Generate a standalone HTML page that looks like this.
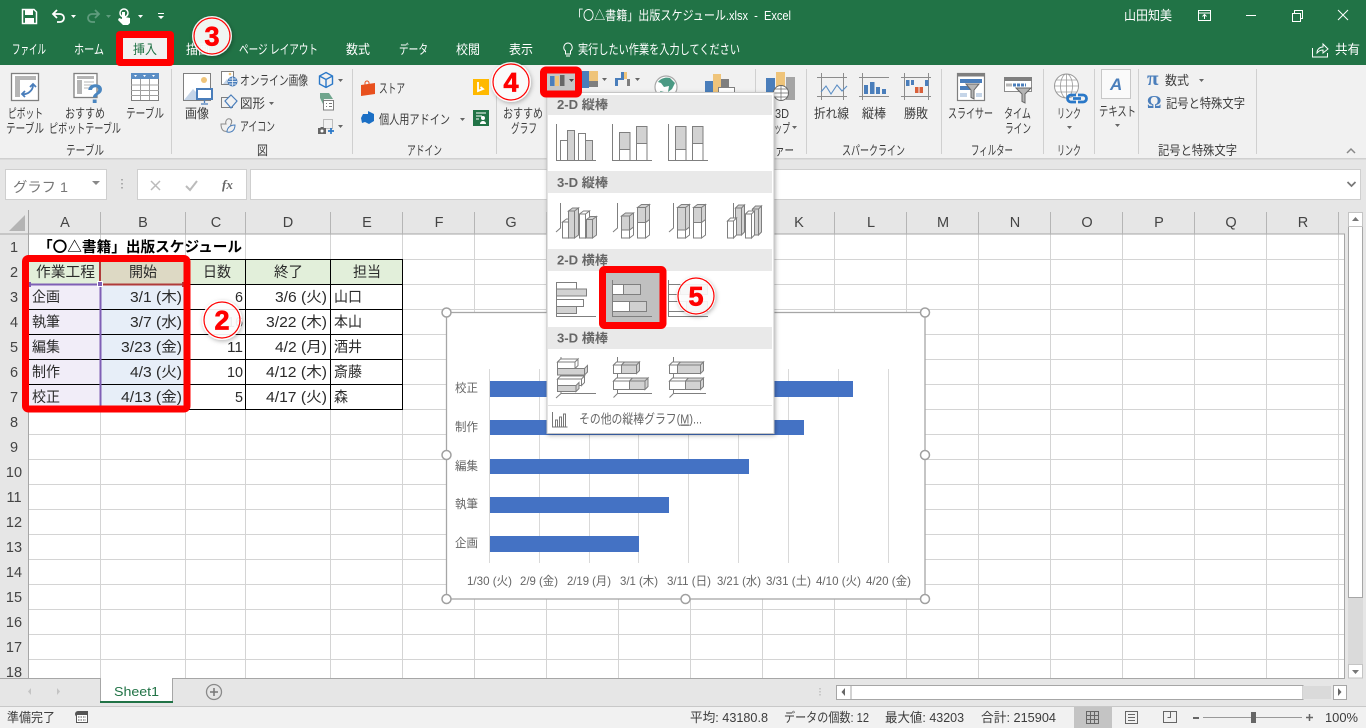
<!DOCTYPE html>
<html lang="ja"><head><meta charset="utf-8"><title>Excel</title>
<style>
html,body{margin:0;padding:0;width:1366px;height:728px;overflow:hidden;background:#e6e6e6}
svg{display:block;position:absolute;left:0;top:0}
text{font-family:"Liberation Sans","Noto Sans CJK JP",sans-serif;font-size:12.5px;fill:#444;white-space:pre}
.w{fill:#fff;font-size:13px}
.r text,text.r{fill:#3c3c3c;font-size:13px}
.c text{font-size:14.5px;fill:#2a2a2a}
.h text{font-size:14.5px;fill:#444}
.ch text{fill:#666;font-size:12px}
.m text{fill:#666;font-weight:bold;font-size:12.5px}
.b{fill:#fff;stroke:#7f7f7f;stroke-width:1}
.g{fill:#d2d2d2;stroke:#7f7f7f;stroke-width:1}
.ax{fill:none;stroke:#7f7f7f;stroke-width:1}
.n text{font-family:"Liberation Sans",sans-serif;font-weight:bold;font-size:27px;fill:#f00;stroke:#f00;stroke-width:.7px}
</style></head><body>
<svg width="1366" height="728" viewBox="0 0 1366 728">
<defs><filter id="s" x="-30%" y="-30%" width="170%" height="170%"><feDropShadow dx="1" dy="1.5" stdDeviation="2" flood-color="#000" flood-opacity=".3"/></filter></defs>

<!-- base -->
<rect width="1366" height="728" fill="#e6e6e6"/>
<rect width="1366" height="65" fill="#217346"/>
<rect y="65" width="1366" height="93" fill="#f1f1f1"/>
<rect y="158" width="1366" height="1.5" fill="#d0d0d0"/>

<!-- title -->
<text class="w" x="572" y="20" textLength="219" lengthAdjust="spacingAndGlyphs">「〇△書籍」出版スケジュール.xlsx  -  Excel</text>
<text class="w" x="1124" y="20" textLength="48" lengthAdjust="spacingAndGlyphs">山田知美</text>
<!-- qat -->
<path d="M22.5 9.5h11.5l2.500 2.500v11.500h-14z" fill="none" stroke="#fff" stroke-width="1.500"/>
<rect x="25" y="10" width="8" height="5" fill="#fff"/><rect x="25" y="18" width="9" height="5" fill="#fff"/>
<path d="M53 14h7a4 4 0 0 1 0 8h-3M57 10l-4 4 4 4" fill="none" stroke="#fff" stroke-width="1.800"/>
<path d="M71 15h5l-2.500 3z" fill="#fff"/>
<path d="M99 14h-7a4 4 0 0 0 0 8h3M95 10l4 4-4 4" fill="none" stroke="#5f9c7d" stroke-width="1.800"/>
<path d="M106 15h5l-2.500 3z" fill="#5f9c7d"/>
<circle cx="124" cy="13" r="4" fill="none" stroke="#fff" stroke-width="1.500"/>
<path d="M122 12h3v5l5 1v5l-2 2h-5l-5-5 1-2 3 1z" fill="#fff"/>
<path d="M138 15h5l-2.500 3z" fill="#fff"/>
<path d="M158 13h6v1h-6zM158 16h6l-3 3z" fill="#fff"/>
<!-- window buttons -->
<rect x="1198.500" y="10.500" width="12" height="10" fill="none" stroke="#fff"/><path d="M1198 13h12M1204.500 19v-4M1202.500 16.500l2-2 2 2" fill="none" stroke="#fff"/>
<rect x="1246" y="15" width="10" height="1" fill="#fff"/>
<path d="M1292.500 13.500h8v8h-8zM1294.500 13v-2.500h8v8H1301" fill="none" stroke="#fff"/>
<path d="M1338 10l10 10M1348 10l-10 10" stroke="#fff" fill="none"/>
<!-- tabs -->
<g>
<text class="w" x="12" y="54" textLength="34" lengthAdjust="spacingAndGlyphs">ファイル</text>
<text class="w" x="74" y="54" textLength="30" lengthAdjust="spacingAndGlyphs">ホーム</text>
<rect x="116" y="31" width="58" height="35" rx="4" fill="#f00"/>
<rect x="123" y="38" width="44" height="21" fill="#f1f1f1"/>
<text x="133" y="54" textLength="24" lengthAdjust="spacingAndGlyphs" style="fill:#217346;font-size:13px">挿入</text>
<text class="w" x="186" y="54" textLength="24" lengthAdjust="spacingAndGlyphs">描画</text>
<text class="w" x="239" y="54" textLength="79" lengthAdjust="spacingAndGlyphs">ページ レイアウト</text>
<text class="w" x="346" y="54" textLength="24" lengthAdjust="spacingAndGlyphs">数式</text>
<text class="w" x="399" y="54" textLength="29" lengthAdjust="spacingAndGlyphs">データ</text>
<text class="w" x="456" y="54" textLength="24" lengthAdjust="spacingAndGlyphs">校閲</text>
<text class="w" x="509" y="54" textLength="24" lengthAdjust="spacingAndGlyphs">表示</text>
<path d="M568 43a4.500 4.500 0 0 1 2.500 8v3h-5v-3a4.500 4.500 0 0 1 2.500-8zM566 56h4" fill="none" stroke="#fff"/>
<text class="w" x="578" y="54" textLength="162" lengthAdjust="spacingAndGlyphs">実行したい作業を入力してください</text>
<path d="M1312.500 48v9h15v-4M1317 53c0-4 3-6 6-6v-3l5 5-5 4v-3c-3 0-4 1-6 3z" fill="none" stroke="#fff"/>
<text class="w" x="1335" y="54" textLength="25" lengthAdjust="spacingAndGlyphs">共有</text>
</g>

<!-- ribbon separators -->
<g fill="#d0d0d0">
<rect x="171" y="69" width="1" height="85"/><rect x="352" y="69" width="1" height="85"/><rect x="496" y="69" width="1" height="85"/><rect x="755" y="69" width="1" height="85"/><rect x="806" y="69" width="1" height="85"/><rect x="941" y="69" width="1" height="85"/><rect x="1043" y="69" width="1" height="85"/><rect x="1094" y="69" width="1" height="85"/><rect x="1138" y="69" width="1" height="85"/><rect x="1256" y="69" width="1" height="85"/>
</g>

<!-- ribbon text -->
<g class="r">
<text x="8" y="118" textLength="35" lengthAdjust="spacingAndGlyphs">ピボット</text>
<text x="6" y="133" textLength="38" lengthAdjust="spacingAndGlyphs">テーブル</text>
<text x="65" y="118" textLength="40" lengthAdjust="spacingAndGlyphs">おすすめ</text>
<text x="49" y="133" textLength="72" lengthAdjust="spacingAndGlyphs">ピボットテーブル</text>
<text x="126" y="118" textLength="38" lengthAdjust="spacingAndGlyphs">テーブル</text>
<text x="185" y="118" textLength="24" lengthAdjust="spacingAndGlyphs">画像</text>
<text x="240" y="85" textLength="68" lengthAdjust="spacingAndGlyphs">オンライン画像</text>
<text x="240" y="108" textLength="25" lengthAdjust="spacingAndGlyphs">図形</text>
<text x="240" y="131" textLength="35" lengthAdjust="spacingAndGlyphs">アイコン</text>
<text x="379" y="93" textLength="26" lengthAdjust="spacingAndGlyphs">ストア</text>
<text x="379" y="124" textLength="71" lengthAdjust="spacingAndGlyphs">個人用アドイン</text>
<text x="503" y="118" textLength="40" lengthAdjust="spacingAndGlyphs">おすすめ</text>
<text x="511" y="133" textLength="26" lengthAdjust="spacingAndGlyphs">グラフ</text>
<text x="775" y="118" textLength="14" lengthAdjust="spacingAndGlyphs">3D</text>
<text x="774" y="133" textLength="16" lengthAdjust="spacingAndGlyphs">ップ</text>
<text x="775" y="155" textLength="19" lengthAdjust="spacingAndGlyphs">ァー</text>
<text x="66" y="155" textLength="38" lengthAdjust="spacingAndGlyphs">テーブル</text>
<text x="257" y="155" textLength="11" lengthAdjust="spacingAndGlyphs">図</text>
<text x="407" y="155" textLength="35" lengthAdjust="spacingAndGlyphs">アドイン</text>
<text x="814" y="118" textLength="35" lengthAdjust="spacingAndGlyphs">折れ線</text>
<text x="862" y="118" textLength="24" lengthAdjust="spacingAndGlyphs">縦棒</text>
<text x="904" y="118" textLength="24" lengthAdjust="spacingAndGlyphs">勝敗</text>
<text x="948" y="118" textLength="45" lengthAdjust="spacingAndGlyphs">スライサー</text>
<text x="1004" y="118" textLength="27" lengthAdjust="spacingAndGlyphs">タイム</text>
<text x="1005" y="133" textLength="26" lengthAdjust="spacingAndGlyphs">ライン</text>
<text x="1057" y="118" textLength="24" lengthAdjust="spacingAndGlyphs">リンク</text>
<text x="1099" y="116" textLength="37" lengthAdjust="spacingAndGlyphs">テキスト</text>
<text x="1165" y="85" textLength="24" lengthAdjust="spacingAndGlyphs">数式</text>
<text x="1166" y="108" textLength="79" lengthAdjust="spacingAndGlyphs">記号と特殊文字</text>
<text x="842" y="155" textLength="63" lengthAdjust="spacingAndGlyphs">スパークライン</text>
<text x="971" y="155" textLength="42" lengthAdjust="spacingAndGlyphs">フィルター</text>
<text x="1057" y="155" textLength="24" lengthAdjust="spacingAndGlyphs">リンク</text>
<text x="1158" y="155" textLength="79" lengthAdjust="spacingAndGlyphs">記号と特殊文字</text>
</g>
<!-- carets -->
<g fill="#666">
<path d="M269 102h5l-2.500 3zM338 79h5l-2.500 3zM338 125h5l-2.500 3zM460 118h5l-2.500 3zM602 78h5l-2.500 3zM635 78h5l-2.500 3zM792 126h5l-2.500 3zM1067 126h5l-2.500 3zM1115 124h5l-2.500 3zM1199 79h5l-2.500 3z"/>
<path d="M1347 153l4-4 4 4" fill="none" stroke="#888" stroke-width="1.500"/>
</g>

<!-- ribbon icons -->
<!-- pivot -->
<rect x="11.500" y="73.500" width="27" height="27" fill="#fff" stroke="#7f7f7f" stroke-width="1.300"/>
<rect x="15" y="76" width="21" height="4" fill="#b5b5b5"/><rect x="15" y="80" width="5" height="17" fill="#b5b5b5"/>
<path d="M22 94c5 1 11-3 11-9M30 87l3-3 3 3M25 91l-3 3 3 3" fill="none" stroke="#4a7ebb" stroke-width="1.800"/>
<!-- recommended pivot -->
<rect x="74" y="73.500" width="23" height="24" fill="#fff" stroke="#7f7f7f" stroke-width="1.300"/>
<rect x="77" y="76" width="17" height="3" fill="#b5b5b5"/><rect x="77" y="80" width="5" height="14" fill="#b5b5b5"/><path d="M84 82h10M84 85h8M84 88h6" stroke="#b5b5b5"/>
<text x="87" y="103" style="font-size:27px;font-weight:bold;fill:#4a86c0">?</text>
<!-- table -->
<rect x="131.500" y="73.500" width="27" height="27" fill="#fff" stroke="#7f7f7f"/>
<rect x="131" y="73" width="28" height="6" fill="#5b8ec5"/>
<path d="M131 85h28M131 90.500h28M131 95.500h28M140.500 79v21M149.500 79v21" stroke="#a0a0a0"/>
<path d="M134 75h3l-1.500 2zM143 75h3l-1.500 2zM152 75h3l-1.500 2z" fill="#fff"/>
<!-- picture -->
<rect x="183.500" y="73.500" width="27" height="27" fill="#fff" stroke="#7f7f7f"/>
<circle cx="204" cy="80" r="3" fill="#efc47a"/>
<path d="M184 100l9-11 7 7 4 4z" fill="#c5d5e8"/>
<rect x="197" y="89" width="15" height="10" fill="#fff" stroke="#4a7ebb" stroke-width="2"/>
<path d="M204.500 100v3M201 104h7" stroke="#4a7ebb" stroke-width="1.300"/>
<!-- online -->
<rect x="221.500" y="71.500" width="12" height="13" fill="#fff" stroke="#7f7f7f"/>
<circle cx="230" cy="74" r="1.300" fill="#efc47a"/><path d="M223 84l4-5 3 5z" fill="#c5d5e8"/>
<circle cx="232.500" cy="81.500" r="5" fill="#4a7ebb"/><path d="M228 81.500h9M232.500 77v9M229 79h7M229 84h7" stroke="#fff" stroke-width=".7" fill="none"/>
<!-- shapes -->
<rect x="221.500" y="97.500" width="11" height="10" fill="none" stroke="#7f7f7f"/>
<path d="M231 95l6 6-6 7-6-7z" fill="#f1f1f1" stroke="#4a7ebb" stroke-width="1.200"/>
<!-- icons -->
<path d="M221 124h5c-1-3 1-6 4-5 2 1 2 3 1 5l-1 3c-1 4-3 5-6 4-2-1-3-4-3-7z" fill="none" stroke="#8a8a8a"/>
<path d="M227 132c0-4 3-7 8-7 0 5-3 8-8 7z" fill="#f1f1f1" stroke="#4a7ebb"/>
<!-- 3d -->
<path d="M326 72.500l6.500 3.500v8l-6.500 3.500-6.500-3.500v-8zM319.500 76l6.500 3.500 6.500-3.500M326 79.500v8" fill="none" stroke="#2a78c8" stroke-width="1.400"/>
<!-- smartart -->
<path d="M320 93h9l4 6h-9l-1 5-3-6z" fill="#6fa58d"/><rect x="323.500" y="100.500" width="10" height="9.500" fill="#fff" stroke="#7f7f7f"/><path d="M326 103.500h1M329 103.500h3M326 106.500h1M329 106.500h3" stroke="#777"/>
<!-- screenshot -->
<rect x="323.500" y="119.500" width="9" height="9" fill="none" stroke="#888" stroke-dasharray="1 1"/>
<path d="M318 128h2l1-1h2l1 1h2v6h-8z" fill="#666"/><circle cx="322" cy="131" r="1.500" fill="#fff"/>
<path d="M328 131h6M331 128v6" stroke="#2a78c8" stroke-width="1.700"/>
<!-- store, addin -->
<path d="M361 85l14-2v11l-14 2z" fill="#e8501e"/><path d="M365 85v-2a2 2 0 0 1 4 0v1" fill="none" stroke="#e8501e"/>
<path d="M368 111l6 3v7l-5 3-4-2-3 1-1-5 2-4 5 0z" fill="#1b6fc5"/>
<rect x="473" y="79" width="16" height="16" fill="#ffb900"/>
<path d="M478 82v9l5-2-2.500-2" fill="none" stroke="#fff" stroke-width="1.800"/>
<rect x="473" y="110" width="16" height="16" fill="#217346"/>
<path d="M476 113h10M476 116h6M476 119h3" stroke="#fff"/><circle cx="483" cy="118" r="2" fill="#fff"/><path d="M480 124c0-4 6-4 6 0z" fill="#fff"/>
<!-- chart row -->
<rect x="582" y="71" width="7" height="17" fill="#4a7ebb"/><rect x="589" y="71" width="9" height="10" fill="#efc47a"/><rect x="589" y="81" width="9" height="6" fill="#7f7f7f"/>
<rect x="615" y="78" width="3" height="8" fill="#4a7ebb"/><rect x="618" y="78" width="3" height="2" fill="#4a7ebb"/><rect x="621" y="72" width="3" height="8" fill="#4a7ebb"/><rect x="624" y="72" width="3" height="7" fill="#efc47a"/><rect x="627" y="79" width="3" height="7" fill="#7f7f7f"/>
<circle cx="666" cy="87" r="11" fill="#fff" stroke="#a8a8a8" stroke-width="1.200"/><path d="M658 82c3-4 8-5 12-4l5 5-3 6-4 3 1-6-5 1-3-4z" fill="#4b9a84"/><path d="M660 91l4 1 1 5-3-2z" fill="#4b9a84"/>
<rect x="705" y="81" width="8" height="11" fill="#4a7ebb"/><rect x="713" y="74" width="8" height="18" fill="#efc47a"/><rect x="721" y="79" width="8" height="13" fill="#7f7f7f"/>
<rect x="718.500" y="87.500" width="16" height="6" fill="#fff" stroke="#7f7f7f"/>
<rect x="766" y="78" width="9" height="20" fill="#4a7ebb"/><rect x="776" y="72" width="9" height="20" fill="#efc47a"/><rect x="786" y="77" width="9" height="23" fill="#a5a5a5"/>
<circle cx="781" cy="93" r="7.500" fill="#fff" stroke="#666"/><path d="M773.500 93h15M781 85.500v15M775 89h12M775 97h12" stroke="#666" stroke-width=".7"/>
<!-- sparklines -->
<g fill="none" stroke="#8c8c8c">
<path d="M817 77.500h30M817 96.500h30M821.500 73v27M843.500 73v27"/>
<path d="M859 77.500h30M859 96.500h30M862.500 73v27"/>
<path d="M901 77.500h30M901 96.500h30M904.500 73v27M928.500 73v27"/>
</g>
<path d="M821 92l5-6 5 8 6-9 5 6 5-5" fill="none" stroke="#5b8ec5" stroke-width="1.100"/>
<g fill="#4a7ebb"><rect x="864" y="85" width="4" height="9"/><rect x="870" y="82" width="4.500" height="12"/><rect x="876" y="87" width="4" height="7"/><rect x="882" y="89" width="4" height="5"/>
<rect x="906" y="80" width="3.500" height="6"/><rect x="911" y="80" width="3" height="5"/><rect x="925" y="80" width="3.500" height="6"/></g>
<rect x="915" y="87" width="3.500" height="6" fill="#d9603a"/><rect x="919.500" y="87" width="3.500" height="6" fill="#d9603a"/>
<!-- slicer -->
<rect x="957.500" y="73.500" width="27" height="27" fill="#fff" stroke="#7f7f7f" stroke-width="1.200"/><rect x="957" y="73" width="28" height="3.500" fill="#7f7f7f"/>
<rect x="960" y="79" width="22" height="4" fill="#4a7ebb"/><rect x="960" y="86" width="14" height="4" fill="#4a7ebb"/><rect x="960" y="93" width="7" height="4" fill="#c5d5e8"/><rect x="976" y="93" width="6" height="4" fill="#c5d5e8"/>
<path d="M966 84h13l-5 6v9l-3-1.500V90z" fill="#b5b5b5" stroke="#666"/>
<!-- timeline -->
<rect x="1004.500" y="77.500" width="27" height="14" fill="#fff" stroke="#8c8c8c"/><rect x="1004" y="77" width="28" height="4" fill="#7f7f7f"/>
<path d="M1006 85h6" stroke="#b5b5b5" stroke-width="3"/><path d="M1013 85h13" stroke="#4a7ebb" stroke-width="3" stroke-dasharray="3 1"/>
<path d="M1016 88h15l-6 6v9l-3-1.500V94z" fill="#b5b5b5" stroke="#666"/>
<!-- link -->
<circle cx="1066.500" cy="86" r="12" fill="#fff" stroke="#9a9a9a"/><path d="M1054.500 86h24M1066.500 74v24M1056 80h21M1056 92h21" stroke="#9a9a9a" stroke-width=".8"/><ellipse cx="1066.500" cy="86" rx="6" ry="12" fill="none" stroke="#9a9a9a" stroke-width=".8"/>
<path d="M1076 102h-5a3.500 3.500 0 0 1 0-7h5M1073 98.500h8M1078 95h5a3.500 3.500 0 0 1 0 7h-5" fill="none" stroke="#2a78c8" stroke-width="2.800"/>
<!-- text -->
<rect x="1101.500" y="69.500" width="29" height="29" fill="#fafafa" stroke="#c8c8c8"/>
<text x="1110" y="90" style="font-size:17px;font-weight:bold;font-style:italic;fill:#4a7ebb">A</text>
<text x="1147" y="85" style="font-family:'Liberation Serif',serif;font-size:21px;font-weight:bold;fill:#4a7ebb">π</text>
<text x="1147" y="108" style="font-family:'Liberation Serif',serif;font-size:18px;font-weight:bold;fill:#4a7ebb">Ω</text>

<!-- formula bar -->
<rect x="5.500" y="169.500" width="101" height="30" fill="#fff" stroke="#cfcfcf"/>
<text x="13" y="192" textLength="55" lengthAdjust="spacingAndGlyphs" style="font-size:14px;fill:#777">グラフ 1</text>
<path d="M92 181h8l-4 4z" fill="#888"/>
<path d="M122 179v1.500M122 183v1.500M122 187v1.500" stroke="#999" stroke-width="1.500"/>
<rect x="137.500" y="169.500" width="109" height="30" fill="#fff" stroke="#cfcfcf"/>
<rect x="250.500" y="169.500" width="1110" height="30" fill="#fff" stroke="#cfcfcf"/>
<path d="M151 181l9 9M160 181l-9 9" stroke="#bbb" stroke-width="1.500"/>
<path d="M186 186l4 4 7-9" stroke="#bbb" stroke-width="2" fill="none"/>
<text x="222" y="189" style="font-family:'Liberation Serif',serif;font-style:italic;font-weight:bold;font-size:13px;fill:#666">fx</text>
<path d="M1347.500 182l4 4 4-4" fill="none" stroke="#777" stroke-width="1.700"/>

<!-- sheet -->
<rect x="29" y="234" width="1316" height="444" fill="#fff"/>
<g stroke="#d4d4d4" stroke-width="1">
<path d="M29 259.500h1316M29 284.500h1316M29 309.500h1316M29 334.500h1316M29 359.500h1316M29 384.500h1316M29 409.500h1316M29 434.500h1316M29 459.500h1316M29 484.500h1316M29 509.500h1316M29 534.500h1316M29 559.500h1316M29 584.500h1316M29 609.500h1316M29 634.500h1316M29 659.500h1316"/>
<path d="M100.500 234v444M185.500 234v444M245.500 234v444M330.500 234v444M402.500 234v444M474.500 234v444M546.500 234v444M618.500 234v444M690.500 234v444M762.500 234v444M834.500 234v444M906.500 234v444M978.500 234v444M1050.500 234v444M1122.500 234v444M1194.500 234v444M1266.500 234v444M1338.500 234v444"/>
</g>
<path d="M1344.500 234v444.500H0" stroke="#a6a6a6" fill="none"/>
<path d="M0 234h1345" stroke="#a6a6a6"/>
<path d="M28.500 210v468" stroke="#a6a6a6"/>
<g stroke="#b5b5b5"><path d="M100.500 212v22M185.500 212v22M245.500 212v22M330.500 212v22M402.500 212v22M474.500 212v22M546.500 212v22M618.500 212v22M690.500 212v22M762.500 212v22M834.500 212v22M906.500 212v22M978.500 212v22M1050.500 212v22M1122.500 212v22M1194.500 212v22M1266.500 212v22M1338.500 212v22"/></g>
<path d="M25 215v16H9z" fill="#b4b4b4"/>
<g class="h" text-anchor="middle">
<text x="65" y="227">A</text><text x="143" y="227">B</text><text x="216" y="227">C</text><text x="288" y="227">D</text><text x="367" y="227">E</text><text x="439" y="227">F</text><text x="511" y="227">G</text><text x="583" y="227">H</text><text x="655" y="227">I</text><text x="727" y="227">J</text><text x="799" y="227">K</text><text x="871" y="227">L</text><text x="943" y="227">M</text><text x="1015" y="227">N</text><text x="1087" y="227">O</text><text x="1159" y="227">P</text><text x="1231" y="227">Q</text><text x="1303" y="227">R</text>
<text x="14" y="252">1</text><text x="14" y="277">2</text><text x="14" y="302">3</text><text x="14" y="327">4</text><text x="14" y="352">5</text><text x="14" y="377">6</text><text x="14" y="402">7</text><text x="14" y="427">8</text><text x="14" y="452">9</text><text x="14" y="477">10</text><text x="14" y="502">11</text><text x="14" y="527">12</text><text x="14" y="552">13</text><text x="14" y="577">14</text><text x="14" y="602">15</text><text x="14" y="627">16</text><text x="14" y="652">17</text><text x="14" y="677">18</text>
</g>

<!-- table -->
<rect x="29" y="260" width="374" height="24" fill="#e2efda"/>
<rect x="101" y="260" width="85" height="24" fill="#ddd9c4"/>
<rect x="29" y="285" width="72" height="124" fill="#f1edf8"/>
<rect x="101" y="285" width="85" height="124" fill="#e7eef8"/>
<g stroke="#000" fill="none">
<path d="M29 259.500h374M29 284.500h374M29 309.500h374M29 334.500h374M29 359.500h374M29 384.500h374M29 409.500h374"/>
<path d="M100.500 259v151M185.500 259v151M245.500 259v151M330.500 259v151M402.500 259v151"/>
</g>
<path d="M29 284.500h72M100.500 284v122" stroke="#7f5fb5" stroke-width="2" fill="none"/>
<path d="M101 284.500h83M100 262v22" stroke="#b03a3a" stroke-width="2" fill="none"/>
<rect x="97.500" y="281.500" width="5" height="5" fill="#7f5fb5" stroke="#fff"/>
<rect x="28" y="282" width="3" height="5" fill="#7f5fb5"/><rect x="182" y="282" width="3" height="5" fill="#b03a3a"/>
<g class="c">
<text x="38" y="252" textLength="204" lengthAdjust="spacingAndGlyphs" style="font-weight:bold;fill:#000">「〇△書籍」出版スケジュール</text>
<text x="36" y="277" textLength="59" lengthAdjust="spacingAndGlyphs">作業工程</text>
<text x="129" y="277" textLength="28" lengthAdjust="spacingAndGlyphs">開始</text>
<text x="203" y="277" textLength="28" lengthAdjust="spacingAndGlyphs">日数</text>
<text x="274" y="277" textLength="29" lengthAdjust="spacingAndGlyphs">終了</text>
<text x="353" y="277" textLength="28" lengthAdjust="spacingAndGlyphs">担当</text>
<text x="32" y="302" textLength="28" lengthAdjust="spacingAndGlyphs">企画</text>
<text x="32" y="327" textLength="28" lengthAdjust="spacingAndGlyphs">執筆</text>
<text x="32" y="352" textLength="28" lengthAdjust="spacingAndGlyphs">編集</text>
<text x="32" y="377" textLength="28" lengthAdjust="spacingAndGlyphs">制作</text>
<text x="32" y="402" textLength="28" lengthAdjust="spacingAndGlyphs">校正</text>
<text x="130" y="302" textLength="52" lengthAdjust="spacingAndGlyphs">3/1 (木)</text>
<text x="130" y="327" textLength="52" lengthAdjust="spacingAndGlyphs">3/7 (水)</text>
<text x="121" y="352" textLength="61" lengthAdjust="spacingAndGlyphs">3/23 (金)</text>
<text x="130" y="377" textLength="52" lengthAdjust="spacingAndGlyphs">4/3 (火)</text>
<text x="121" y="402" textLength="61" lengthAdjust="spacingAndGlyphs">4/13 (金)</text>
<text x="235" y="302" textLength="8" lengthAdjust="spacingAndGlyphs">6</text>
<text x="227" y="327" textLength="16" lengthAdjust="spacingAndGlyphs">16</text>
<text x="227" y="352" textLength="16" lengthAdjust="spacingAndGlyphs">11</text>
<text x="227" y="377" textLength="16" lengthAdjust="spacingAndGlyphs">10</text>
<text x="235" y="402" textLength="8" lengthAdjust="spacingAndGlyphs">5</text>
<text x="275" y="302" textLength="52" lengthAdjust="spacingAndGlyphs">3/6 (火)</text>
<text x="266" y="327" textLength="61" lengthAdjust="spacingAndGlyphs">3/22 (木)</text>
<text x="275" y="352" textLength="52" lengthAdjust="spacingAndGlyphs">4/2 (月)</text>
<text x="266" y="377" textLength="61" lengthAdjust="spacingAndGlyphs">4/12 (木)</text>
<text x="266" y="402" textLength="61" lengthAdjust="spacingAndGlyphs">4/17 (火)</text>
<text x="334" y="302" textLength="28" lengthAdjust="spacingAndGlyphs">山口</text>
<text x="334" y="327" textLength="28" lengthAdjust="spacingAndGlyphs">本山</text>
<text x="334" y="352" textLength="28" lengthAdjust="spacingAndGlyphs">酒井</text>
<text x="334" y="377" textLength="28" lengthAdjust="spacingAndGlyphs">斎藤</text>
<text x="334" y="402" textLength="14" lengthAdjust="spacingAndGlyphs">森</text>
</g>
<!-- red table box -->
<rect x="25.500" y="258.500" width="161.500" height="150.500" rx="3" fill="none" stroke="#f00" stroke-width="7"/>

<!-- chart -->
<rect x="446.500" y="312.500" width="478.500" height="286.500" fill="#fff" stroke="#a6a6a6" stroke-width="1.300"/>
<g stroke="#d9d9d9"><path d="M489.500 369v194M539.500 369v194M589.500 369v194M638.500 369v194M688.500 369v194M738.500 369v194M788.500 369v194M838.500 369v194M888.500 369v194"/></g>
<g fill="#4472c4"><rect x="490" y="381" width="363" height="16"/><rect x="490" y="420" width="314" height="15"/><rect x="490" y="459" width="259" height="15"/><rect x="490" y="497" width="179" height="16"/><rect x="490" y="536" width="149" height="16"/></g>
<g class="ch">
<text x="455" y="392" textLength="23" lengthAdjust="spacingAndGlyphs">校正</text>
<text x="455" y="431" textLength="23" lengthAdjust="spacingAndGlyphs">制作</text>
<text x="455" y="470" textLength="23" lengthAdjust="spacingAndGlyphs">編集</text>
<text x="455" y="508" textLength="23" lengthAdjust="spacingAndGlyphs">執筆</text>
<text x="455" y="547" textLength="23" lengthAdjust="spacingAndGlyphs">企画</text>
<text x="467" y="585" textLength="45" lengthAdjust="spacingAndGlyphs">1/30 (火)</text>
<text x="520" y="585" textLength="38" lengthAdjust="spacingAndGlyphs">2/9 (金)</text>
<text x="567" y="585" textLength="44" lengthAdjust="spacingAndGlyphs">2/19 (月)</text>
<text x="620" y="585" textLength="38" lengthAdjust="spacingAndGlyphs">3/1 (木)</text>
<text x="667" y="585" textLength="44" lengthAdjust="spacingAndGlyphs">3/11 (日)</text>
<text x="717" y="585" textLength="44" lengthAdjust="spacingAndGlyphs">3/21 (水)</text>
<text x="766" y="585" textLength="45" lengthAdjust="spacingAndGlyphs">3/31 (土)</text>
<text x="816" y="585" textLength="45" lengthAdjust="spacingAndGlyphs">4/10 (火)</text>
<text x="866" y="585" textLength="45" lengthAdjust="spacingAndGlyphs">4/20 (金)</text>
</g>
<g fill="#fff" stroke="#a0a0a0" stroke-width="1.500">
<circle cx="446.500" cy="312.500" r="4.500"/><circle cx="925" cy="312.500" r="4.500"/><circle cx="446.500" cy="455" r="4.500"/><circle cx="925" cy="455" r="4.500"/><circle cx="446.500" cy="599" r="4.500"/><circle cx="685.500" cy="599" r="4.500"/><circle cx="925" cy="599" r="4.500"/>
</g>

<!-- scrollbars -->
<rect x="1348" y="212" width="15" height="466" fill="#dadada"/>
<rect x="1348.500" y="226.500" width="14" height="371" fill="#fff" stroke="#a6a6a6"/>
<rect x="1348.500" y="212.500" width="14" height="14" fill="#fff" stroke="#c4c4c4"/>
<rect x="1348.500" y="664.500" width="14" height="13.500" fill="#fff" stroke="#c4c4c4"/>
<path d="M1352 221h7l-3.500-4zM1352 670h7l-3.500 4z" fill="#777"/>
<!-- tab bar -->
<rect x="100" y="678" width="73" height="24" fill="#fff"/>
<path d="M100.500 678v24M172.500 678v24" stroke="#a6a6a6"/>
<rect x="100" y="701" width="73" height="2" fill="#217346"/>
<text x="114" y="696" textLength="45" lengthAdjust="spacingAndGlyphs" style="font-size:12.500px;fill:#217346">Sheet1</text>
<path d="M31 688v7l-3-3.500zM57 688v7l3-3.500z" fill="#c4c4c4"/>
<circle cx="214" cy="692" r="7.500" fill="none" stroke="#8a8a8a" stroke-width="1.300"/><path d="M210 692h8M214 688v8" stroke="#777" stroke-width="1.500"/>
<path d="M820 688v1.500M820 691v1.500M820 694v1.500" stroke="#aaa"/>
<rect x="836.500" y="685.500" width="15" height="14" fill="#fff" stroke="#a6a6a6"/>
<rect x="851" y="685.500" width="452" height="14" fill="#fff" stroke="#a6a6a6"/>
<rect x="1303" y="686" width="28" height="13" fill="#dadada"/>
<rect x="1333.500" y="685.500" width="13" height="14" fill="#fff" stroke="#a6a6a6"/>
<path d="M845 688v8l-3.500-4zM1338 688v8l3.500-4z" fill="#666"/>
<!-- status -->
<rect y="706" width="1366" height="22" fill="#f1f1f1"/><rect y="706" width="1366" height="1" fill="#c8c8c8"/>
<g class="r">
<text x="7" y="722" textLength="48" lengthAdjust="spacingAndGlyphs">準備完了</text>
<text x="690" y="722" textLength="78" lengthAdjust="spacingAndGlyphs">平均: 43180.8</text>
<text x="784" y="722" textLength="85" lengthAdjust="spacingAndGlyphs">データの個数: 12</text>
<text x="885" y="722" textLength="79" lengthAdjust="spacingAndGlyphs">最大値: 43203</text>
<text x="981" y="722" textLength="75" lengthAdjust="spacingAndGlyphs">合計: 215904</text>
<text x="1325" y="722" textLength="33" lengthAdjust="spacingAndGlyphs">100%</text>
</g>
<circle cx="78" cy="714" r="3" fill="#555"/><rect x="78" y="711" width="10" height="3" fill="#555"/><rect x="76.500" y="714.500" width="11" height="8" fill="#fff" stroke="#555"/><path d="M78 717h8M78 720h8" stroke="#555" stroke-dasharray="1.500 1"/>
<rect x="1074" y="707" width="38" height="21" fill="#c4c4c4"/>
<path d="M1086.500 711.500h12v12h-12zM1086.500 715.500h12M1086.500 719.500h12M1090.500 711.500v12M1094.500 711.500v12" fill="none" stroke="#666"/>
<rect x="1125.500" y="711.500" width="12" height="12" fill="none" stroke="#666"/><path d="M1128 714.500h7M1128 717.500h7M1128 720.500h7" stroke="#666"/>
<path d="M1163.500 711.500h13v11h-13zM1170.500 711.500v6h-3" fill="none" stroke="#666"/>
<rect x="1193" y="717" width="6" height="2" fill="#666"/>
<rect x="1203" y="717" width="99" height="1" fill="#999"/>
<rect x="1251" y="712" width="5" height="11" fill="#666"/>
<path d="M1306 717.500h7M1309.500 714v7" stroke="#666" stroke-width="1.500"/>

<!-- dropdown menu -->
<rect x="547" y="92.500" width="227" height="341" fill="#fff" stroke="#c6c6c6" filter="url(#s)"/>
<rect x="548" y="95" width="224" height="20" fill="#e9e9e9"/>
<rect x="548" y="171" width="224" height="22" fill="#e9e9e9"/>
<rect x="548" y="249" width="224" height="22" fill="#e9e9e9"/>
<rect x="548" y="327" width="224" height="22" fill="#e9e9e9"/>
<rect x="548" y="405" width="224" height="1" fill="#e0e0e0"/>
<g class="m">
<text x="557" y="109" textLength="51" lengthAdjust="spacingAndGlyphs">2-D 縦棒</text>
<text x="557" y="187" textLength="51" lengthAdjust="spacingAndGlyphs">3-D 縦棒</text>
<text x="557" y="264.500" textLength="51" lengthAdjust="spacingAndGlyphs">2-D 横棒</text>
<text x="557" y="342.500" textLength="51" lengthAdjust="spacingAndGlyphs">3-D 横棒</text>
</g>
<text x="579" y="423.500" textLength="123" lengthAdjust="spacingAndGlyphs" style="fill:#666;font-size:13px">その他の縦棒グラフ(<tspan text-decoration="underline">M</tspan>)...</text>
<path d="M552.500 412v15h15M555.500 427v-7h2v7M559.500 427v-10h2v10M563.500 427v-13h2v13" fill="none" stroke="#777"/>

<!-- 2D column -->
<rect class="b" x="560.500" y="140.500" width="7" height="20"/><rect class="g" x="567.500" y="130.500" width="7" height="30"/><rect class="b" x="578.500" y="133.500" width="7" height="27"/><rect class="g" x="585.500" y="140.500" width="7" height="20"/>
<path class="ax" d="M556.500 124v36.500H596"/>
<rect class="b" x="619.500" y="149.500" width="10.500" height="11"/><rect class="g" x="619.500" y="132.500" width="10.500" height="17"/><rect class="b" x="636.500" y="143.500" width="10.500" height="17"/><rect class="g" x="636.500" y="126.500" width="10.500" height="17"/>
<path class="ax" d="M612.500 124v36.500H652"/>
<rect class="b" x="675.500" y="149.500" width="10.500" height="11"/><rect class="g" x="675.500" y="126.500" width="10.500" height="23"/><rect class="b" x="692.500" y="143.500" width="10.500" height="17"/><rect class="g" x="692.500" y="126.500" width="10.500" height="17"/>
<path class="ax" d="M668.500 124v36.500H708"/>

<!-- 3D column -->
<path class="ax" d="M560.500 203v25l-4.500 4M617.500 203v25l-4.500 4M673.500 203v25l-4.500 4M733.500 203v25l-4.500 4"/>
<path class="b" d="M562.500 222h6v16h-6zm0 0l4-3h6l-4 3zm6 0l4-3v16l-4 3z"/>
<path class="g" d="M568.500 211h6v27h-6zm0 0l4-3h6l-4 3zm6 0l4-3v27l-4 3z"/>
<path class="b" d="M579.500 214h6v24h-6zm0 0l4-3h6l-4 3zm6 0l4-3v24l-4 3z"/>
<path class="g" d="M586.500 219.500h6v18.500h-6zm0 0l4-3h6l-4 3zm6 0l4-3v18.500l-4 3z"/>
<path class="b" d="M621.500 230h8v8h-8zm8 0l4-3v8l-4 3z"/>
<path class="g" d="M621.500 216h8v14h-8zm0 0l4-3h8l-4 3zm8 0l4-3v14l-4 3z"/>
<path class="b" d="M637.500 222.500h8v15.500h-8zm8 0l4-3v15.500l-4 3z"/>
<path class="g" d="M637.500 207.500h8v15h-8zm0 0l4-3h8l-4 3zm8 0l4-3v15l-4 3z"/>
<path class="b" d="M677.500 230h8v8h-8zm8 0l4-3v8l-4 3z"/>
<path class="g" d="M677.500 207.500h8v22.500h-8zm0 0l4-3h8l-4 3zm8 0l4-3v22.500l-4 3z"/>
<path class="b" d="M693.500 222.500h8v15.500h-8zm8 0l4-3v15.500l-4 3z"/>
<path class="g" d="M693.500 207.500h8v15h-8zm0 0l4-3h8l-4 3zm8 0l4-3v15l-4 3z"/>
<path class="g" d="M735.500 208h6v27h-6zm0 0l3-3h6l-3 3zm6 0l3-3v27l-3 3z"/>
<path class="b" d="M727.500 221h6v17h-6zm0 0l3-3h6l-3 3zm6 0l3-3v17l-3 3z"/>
<path class="g" d="M752.500 209h6v26h-6zm0 0l3-3h6l-3 3zm6 0l3-3v26l-3 3z"/>
<path class="b" d="M745.500 214h6v24h-6zm0 0l3-3h6l-3 3zm6 0l3-3v24l-3 3z"/>

<!-- 2D bar -->
<rect class="b" x="556.500" y="282.500" width="20" height="6.500"/><rect class="g" x="556.500" y="289" width="30" height="7"/><rect class="b" x="556.500" y="299.500" width="27" height="7"/><rect class="g" x="556.500" y="306.500" width="20" height="7"/>
<path class="ax" d="M556.500 282v34.500H596"/>
<rect x="602.500" y="269.500" width="60.500" height="56" fill="#c0c0c0" stroke="#f00" stroke-width="7" rx="2"/>
<rect class="b" x="612.500" y="284.500" width="11" height="10"/><rect x="623.500" y="284.500" width="17" height="10" fill="#d0d0d0" stroke="#7f7f7f"/><rect class="b" x="612.500" y="301.500" width="17" height="10"/><rect x="629.500" y="301.500" width="17" height="10" fill="#d0d0d0" stroke="#7f7f7f"/>
<path class="ax" d="M612.500 280v36.500H652"/>
<path class="ax" d="M668.500 280v36.500H708"/>
<rect class="b" x="668.500" y="284.500" width="12" height="10"/><rect class="g" x="680.500" y="284.500" width="27" height="10"/><rect class="b" x="668.500" y="301.500" width="18" height="10"/><rect class="g" x="686.500" y="301.500" width="21" height="10"/>

<!-- 3D bar -->
<path class="ax" d="M561 357v36.500h35M561 393.500l-5 4.500M617.500 357v36.500H652M617.500 393.500l-4 4M673.500 357v36.500H706M673.500 393.500l-4 4"/>
<path class="b" d="M557.500 362h17.500v6.500h-17.500zm0 0l3-3h17.500l-3 3zm17.500 0l3-3v6.500l-3 3z"/>
<path class="g" d="M557.500 368.500h27v6.500h-27zm27 0l3-3v6.500l-3 3z"/>
<path class="b" d="M557.500 379h24v6.500h-24zm0 0l3-3h24l-3 3zm24 0l3-3v6.500l-3 3z"/>
<path class="g" d="M557.500 385.500h18.500v6h-18.500zm18.500 0l3-3v6l-3 3z"/>
<path class="b" d="M613.500 365h8v8.500h-8zm0 0l3-3h8l-3 3z"/>
<path class="g" d="M621.500 365h15v8.500h-15zm0 0l3-3h15l-3 3zm15 0l3-3v8.500l-3 3z"/>
<path class="b" d="M613.500 381h16v8.500h-16zm0 0l3-3h16l-3 3z"/>
<path class="g" d="M629.500 381h15.500v8.500h-15.500zm0 0l3-3h15.500l-3 3zm15.500 0l3-3v8.500l-3 3z"/>
<path class="b" d="M669.500 365h8v8.500h-8zm0 0l3-3h8l-3 3z"/>
<path class="g" d="M677.500 365h23v8.500h-23zm0 0l3-3h23l-3 3zm23 0l3-3v8.500l-3 3z"/>
<path class="b" d="M669.500 381h16v8.500h-16zm0 0l3-3h16l-3 3z"/>
<path class="g" d="M685.500 381h15v8.500h-15zm0 0l3-3h15l-3 3zm15 0l3-3v8.500l-3 3z"/>

<!-- red chart button -->
<rect x="543.500" y="70" width="35" height="24" rx="2.500" fill="#c6c6c6" stroke="#f00" stroke-width="7"/>
<rect x="550" y="76" width="4.500" height="10" fill="#4a7ebb"/><rect x="555" y="76" width="4" height="10" fill="#efc47a"/><rect x="560" y="75" width="4.500" height="11" fill="#666"/>
<path d="M569 79h5l-2.500 3z" fill="#444"/>

<!-- numbered badges -->
<g class="n" text-anchor="middle">
<g><circle cx="212" cy="36" r="20" fill="#fff" fill-opacity=".92" filter="url(#s)"/><circle cx="212" cy="36" r="18" fill="none" stroke="#f00" stroke-width="1.200"/><text x="212" y="45.500">3</text></g>
<g><circle cx="511" cy="82" r="20" fill="#fff" fill-opacity=".88" filter="url(#s)"/><circle cx="511" cy="82" r="18" fill="none" stroke="#f00" stroke-width="1.200"/><text x="511" y="91.500">4</text></g>
<g><circle cx="696" cy="296" r="19.500" fill="#fff" fill-opacity=".88" filter="url(#s)"/><circle cx="696" cy="296" r="18" fill="none" stroke="#f00" stroke-width="1.200"/><text x="696" y="305.500">5</text></g>
<g><circle cx="222" cy="320" r="20" fill="#fff" fill-opacity=".9" filter="url(#s)"/><circle cx="222" cy="320" r="18" fill="none" stroke="#f00" stroke-width="1.200"/><text x="222" y="329.500">2</text></g>
</g>
</svg>
</body></html>
